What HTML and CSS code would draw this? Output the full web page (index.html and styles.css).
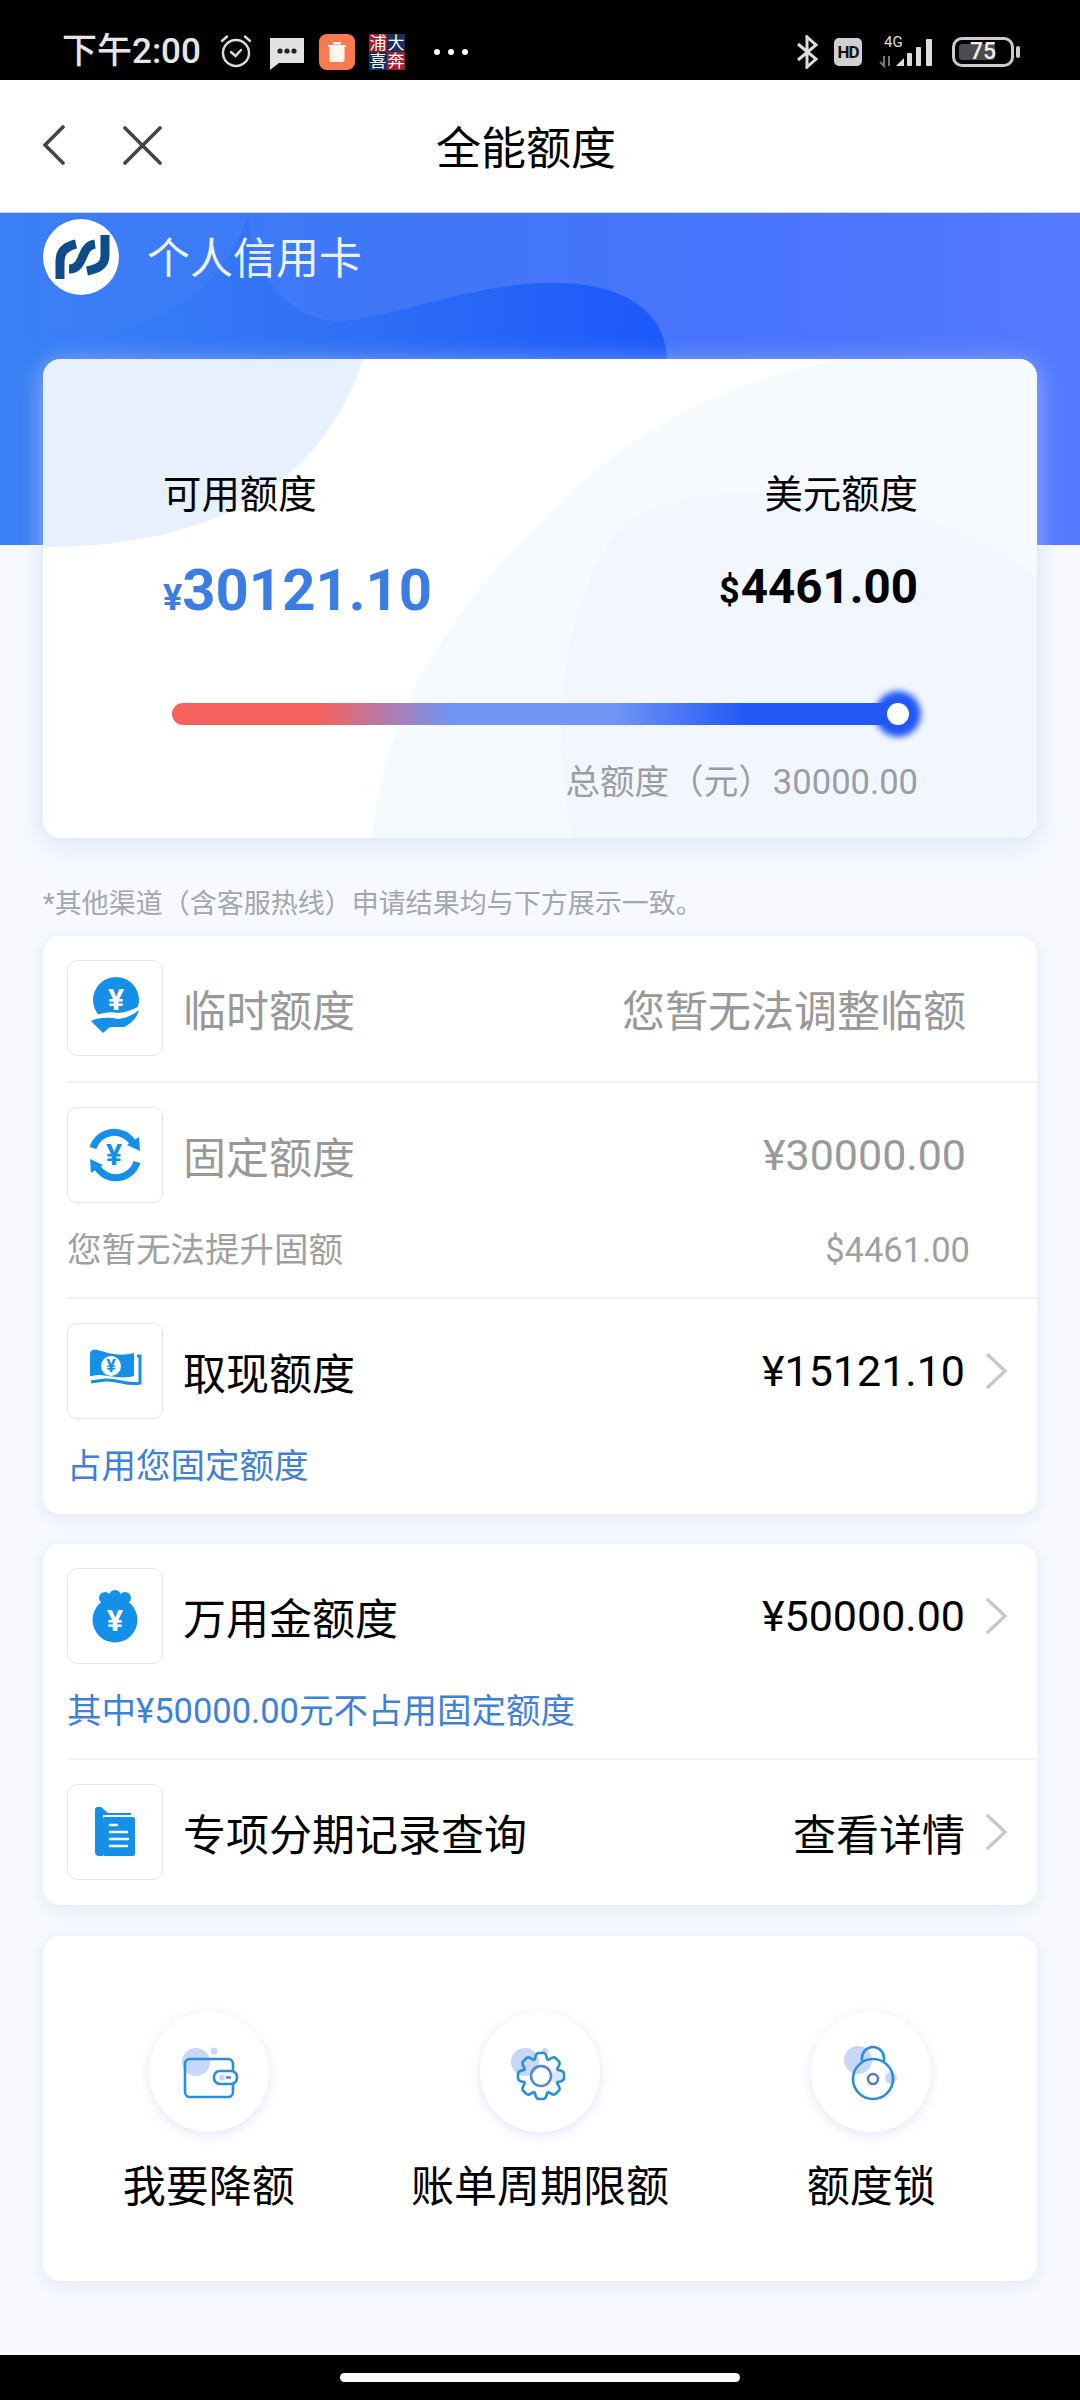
FILE: index.html
```html
<!DOCTYPE html>
<html lang="zh-CN">
<head>
    <meta charset="UTF-8">
    <meta name="viewport" content="width=device-width, initial-scale=1.0">
    <title>全能额度</title>
    <link rel="stylesheet" href="styles.css">
</head>
<body>
    <!-- Status bar -->
    <div class="status-bar">
        <span class="time">下午2:00</span>
        <svg class="st-alarm" width="34" height="34" viewBox="0 0 34 34" fill="none" stroke="#ddd" stroke-width="2.4" stroke-linecap="round">
            <circle cx="17" cy="19" r="13"/>
            <path d="M3 7 L8 2.5 M31 7 L26 2.5"/>
            <path d="M12 18 L16.500 22 L22 16"/>
        </svg>
        <svg class="st-msg" width="34" height="32" viewBox="0 0 34 32">
            <path d="M0 0 H34 V25 H9 L0 32 Z" fill="#e2e2e2"/>
            <circle cx="10" cy="13" r="2.600" fill="#222"/>
            <circle cx="17" cy="13" r="2.600" fill="#222"/>
            <circle cx="24" cy="13" r="2.600" fill="#222"/>
        </svg>
        <svg class="st-app" width="36" height="36" viewBox="0 0 36 36">
            <rect width="36" height="36" rx="8" fill="#fb7a50"/>
            <path d="M9 11 H27 V13 H25.500 V26 Q25.500 28 23.500 28 H12.500 Q10.500 28 10.500 26 V13 H9 Z" fill="#fdf6ee"/>
            <rect x="14" y="8" width="8" height="2.500" rx="1" fill="#fdf6ee"/>
        </svg>
        <div class="st-pic">
            <span class="pic-red">浦</span><span class="pic-navy">大</span>
            <span class="pic-navy">喜</span><span class="pic-red">奔</span>
        </div>
        <div class="st-dots"><i></i><i></i><i></i></div>

        <div class="st-right">
            <svg width="21" height="34" viewBox="0 0 21 34" fill="none" stroke="#ddd" stroke-width="3">
                <path d="M1 9 L19 24 L10 32 V2 L19 10 L1 25"/>
            </svg>
            <span class="st-hd">HD</span>
            <div class="st-signal">
                <span class="st-4g">4G</span>
                <svg width="57" height="31" viewBox="0 0 57 31">
                    <path d="M5 19 V29 L1 25 M10 29 V19" fill="none" stroke="#777" stroke-width="2"/>
                    <path d="M17 29 L25 21 V29 Z" fill="#ddd"/>
                    <rect x="28" y="16" width="5" height="13" rx="1" fill="#ddd"/>
                    <rect x="37" y="10" width="5" height="19" rx="1" fill="#ddd"/>
                    <rect x="47" y="2" width="6" height="27" rx="1" fill="#ddd"/>
                </svg>
            </div>
            <div class="st-battery"><div class="st-battery-fill"></div><span>75</span></div>
            <div class="st-nub"></div>
        </div>
    </div>

    <!-- Title bar -->
    <div class="title-bar">
        <svg class="ic-back" width="22" height="40" viewBox="0 0 22 40" fill="none" stroke="#444" stroke-width="3.600" stroke-linecap="round">
            <path d="M20 2 L2 20 L20 38"/>
        </svg>
        <svg class="ic-close" width="39" height="39" viewBox="0 0 39 39" fill="none" stroke="#444" stroke-width="3.600" stroke-linecap="round">
            <path d="M2 2 L37 37 M37 2 L2 37"/>
        </svg>
        <h1>全能额度</h1>
    </div>

    <!-- Blue header band -->
    <div class="hero">
        <svg class="hero-bg" width="1080" height="333" viewBox="0 0 1080 333">
            <defs>
                <linearGradient id="blob" x1="60" y1="0" x2="670" y2="0" gradientUnits="userSpaceOnUse">
                    <stop offset="0" stop-color="#3a7ff6"/>
                    <stop offset="0.5" stop-color="#2f6ef5"/>
                    <stop offset="1" stop-color="#1c58fb"/>
                </linearGradient>
            </defs>
            <path d="M248 0 C250 50 280 110 345 108 C410 100 500 60 585 72 C640 80 668 110 667 150 L660 333 H0 V130 C120 130 220 100 248 0 Z" fill="url(#blob)"/>
        </svg>
        <div class="brand">
            <svg class="brand-logo" width="76" height="76" viewBox="0 0 76 76" fill="none" stroke="#0f4c8a" stroke-width="9">
                <circle cx="38" cy="38" r="38" fill="#fff" stroke="none"/>
                <path d="M17 60 V42 C17 32 24 27 33 25"/>
                <path d="M26 50 C42 50 37 27 52 25"/>
                <path d="M62 16 V36 C62 47 54 50 44 52"/>
            </svg>
            <span>个人信用卡</span>
        </div>
    </div>

    <!-- Limit summary card -->
    <div class="summary">
        <svg class="summary-bg" width="994" height="479" viewBox="0 0 994 479">
            <path d="M0 0 H320 C285 110 190 188 0 188 Z" fill="#e8f0fd"/>
            <path d="M797 0 H994 V479 H329 C345 330 420 240 510 150 C600 60 700 20 797 0 Z" fill="#f6f9fe"/>
            <path d="M580 165 C640 130 700 132 750 134 C860 145 950 180 994 220 V479 H529 C505 360 520 240 580 165 Z" fill="#f2f6fe"/>
        </svg>
        <div class="summary-body">
            <div class="summary-top">
                <div>
                    <div class="summary-label">可用额度</div>
                    <div class="amount amount-cny"><small>¥</small>30121.10</div>
                </div>
                <div class="summary-right">
                    <div class="summary-label">美元额度</div>
                    <div class="amount amount-usd"><small>$</small>4461.00</div>
                </div>
            </div>
            <div class="slider"><div class="slider-knob"></div></div>
            <div class="summary-total">总额度（元）30000.00</div>
        </div>
    </div>

    <p class="note">*其他渠道（含客服热线）申请结果均与下方展示一致。</p>

    <div class="card">
        <div class="item roomy">
            <div class="item-main disabled">
                <div class="item-icon">
                    <svg width="96" height="96" viewBox="0 0 96 96">
                        <circle cx="49" cy="40" r="23" fill="#1590e8"/>
                        <text x="49" y="50" class="glyph glyph-lg">¥</text>
                        <path d="M24 62 C34 54 44 55 52 56 C60 55 68 52 73 49" fill="none" stroke="#fff" stroke-width="6"/>
                        <path d="M24 61 C32 57 42 57 50 59 C58 59 66 55 72 50 C70 58 64 64 57 67 L43 67 L36 73 Z" fill="#1590e8"/>
                    </svg>
                </div>
                <span class="item-title">临时额度</span>
                <span class="item-val no-arrow">您暂无法调整临额</span>
            </div>
        </div>
        <div class="item">
            <div class="item-main disabled">
                <div class="item-icon">
                    <svg width="96" height="96" viewBox="0 0 96 96">
                        <g fill="none" stroke="#1590e8" stroke-width="7">
                            <path d="M26 41 A22 22 0 0 1 66 36"/>
                            <path d="M70 55 A22 22 0 0 1 30 60"/>
                        </g>
                        <path d="M60 38 L72 30 L73 44 Z M36 58 L24 66 L23 52 Z" fill="#1590e8"/>
                        <text x="47" y="58" class="glyph glyph-lg blue">¥</text>
                    </svg>
                </div>
                <span class="item-title">固定额度</span>
                <span class="item-val no-arrow">¥30000.00</span>
            </div>
            <div class="item-sub gray">
                <span>您暂无法提升固额</span>
                <span class="sub-val">$4461.00</span>
            </div>
        </div>
        <div class="item last">
            <div class="item-main">
                <div class="item-icon">
                    <svg width="96" height="96" viewBox="0 0 96 96">
                        <path d="M23 31 C23 27 26 26 30 27 C42 30 52 34 67 30 V53 C52 57 40 51 30 52 C26 53 23 53 23 53 Z" fill="#1590e8"/>
                        <path d="M70 33 H73 V60 C60 63 50 56 38 57 C32 58 27 58 24 59" fill="none" stroke="#1590e8" stroke-width="3"/>
                        <circle cx="44" cy="43" r="10" fill="#fff"/>
                        <text x="44" y="49" class="glyph glyph-sm blue">¥</text>
                    </svg>
                </div>
                <span class="item-title">取现额度</span>
                <span class="item-val">¥15121.10</span>
                <svg class="chevron" width="22" height="38" viewBox="0 0 22 38" fill="none" stroke="#c8c8c8" stroke-width="3.400">
                    <path d="M2 2 L20 19 L2 36"/>
                </svg>
            </div>
            <div class="item-sub blue">占用您固定额度</div>
        </div>
    </div>

    <div class="card gap">
        <div class="item">
            <div class="item-main">
                <div class="item-icon">
                    <svg width="96" height="96" viewBox="0 0 96 96">
                        <circle cx="48" cy="52" r="22.500" fill="#1590e8"/>
                        <circle cx="38" cy="30" r="6" fill="#1590e8"/>
                        <circle cx="48" cy="28" r="6" fill="#1590e8"/>
                        <circle cx="58" cy="30" r="6" fill="#1590e8"/>
                        <rect x="38" y="30" width="20" height="6" fill="#1590e8"/>
                        <text x="48" y="63" class="glyph glyph-lg">¥</text>
                    </svg>
                </div>
                <span class="item-title">万用金额度</span>
                <span class="item-val">¥50000.00</span>
                <svg class="chevron" width="22" height="38" viewBox="0 0 22 38" fill="none" stroke="#c8c8c8" stroke-width="3.400">
                    <path d="M2 2 L20 19 L2 36"/>
                </svg>
            </div>
            <div class="item-sub blue">其中¥50000.00元不占用固定额度</div>
        </div>
        <div class="item last">
            <div class="item-main">
                <div class="item-icon">
                    <svg width="96" height="96" viewBox="0 0 96 96">
                        <path d="M28 26 Q28 23 31 23 H34 L41 29 H64 V31 H36 V72 H32 Q28 72 28 68 Z" fill="#1590e8"/>
                        <rect x="36" y="33" width="32" height="39" rx="2" fill="#1590e8"/>
                        <g stroke="#fff" stroke-width="2.500" stroke-linecap="round">
                            <path d="M43 41 H50 M43 48 H60 M43 55 H61 M43 62 H60"/>
                        </g>
                    </svg>
                </div>
                <span class="item-title">专项分期记录查询</span>
                <span class="item-val">查看详情</span>
                <svg class="chevron" width="22" height="38" viewBox="0 0 22 38" fill="none" stroke="#c8c8c8" stroke-width="3.400">
                    <path d="M2 2 L20 19 L2 36"/>
                </svg>
            </div>
        </div>
    </div>

    <div class="card gap actions">
        <div class="action">
            <div class="action-icon">
                <svg width="120" height="120" viewBox="0 0 120 120">
                    <circle cx="47" cy="50" r="14" fill="#c6d7f7"/>
                    <circle cx="65" cy="39" r="3.500" fill="#c6d7f7"/>
                    <rect x="36" y="47" width="48" height="38" rx="5" fill="none" stroke="#2a8fd6" stroke-width="2.600"/>
                    <rect x="65" y="59" width="23" height="13" rx="6" fill="#fff" stroke="#2a8fd6" stroke-width="2.600"/>
                    <circle cx="73" cy="65.500" r="3" fill="#c6d7f7"/>
                    <path d="M77 65.500 H82" stroke="#5b78c8" stroke-width="2.400"/>
                </svg>
            </div>
            <span>我要降额</span>
        </div>
        <div class="action">
            <div class="action-icon">
                <svg width="120" height="120" viewBox="0 0 120 120">
                    <defs>
                        <path id="tooth" d="M-6.500 -15.700 C-5.500 -18 -6 -22.500 -2.500 -23 H2.500 C6 -22.500 5.500 -18 6.500 -15.700"/>
                    </defs>
                    <circle cx="45" cy="50" r="14" fill="#c6d7f7"/>
                    <circle cx="65" cy="39" r="3" fill="#c6d7f7"/>
                    <circle cx="77" cy="65" r="6" fill="#dbe6fa"/>
                    <g transform="translate(61 64)" fill="none" stroke="#2a8fd6" stroke-width="2.600">
                        <use href="#tooth"/>
                        <use href="#tooth" transform="rotate(45)"/>
                        <use href="#tooth" transform="rotate(90)"/>
                        <use href="#tooth" transform="rotate(135)"/>
                        <use href="#tooth" transform="rotate(180)"/>
                        <use href="#tooth" transform="rotate(225)"/>
                        <use href="#tooth" transform="rotate(270)"/>
                        <use href="#tooth" transform="rotate(315)"/>
                    </g>
                    <circle cx="61" cy="64" r="10" fill="none" stroke="#5a86cc" stroke-width="2.600"/>
                </svg>
            </div>
            <span>账单周期限额</span>
        </div>
        <div class="action">
            <div class="action-icon">
                <svg width="120" height="120" viewBox="0 0 120 120">
                    <circle cx="47" cy="48" r="14" fill="#c6d7f7"/>
                    <circle cx="80" cy="66" r="6" fill="#c6d7f7"/>
                    <path d="M51 49 V46 A11 11 0 0 1 73 46 V49" fill="none" stroke="#2a8fd6" stroke-width="2.600"/>
                    <circle cx="62" cy="67" r="20" fill="none" stroke="#2a8fd6" stroke-width="2.600"/>
                    <circle cx="62" cy="67" r="5" fill="none" stroke="#5a78c8" stroke-width="2.600"/>
                </svg>
            </div>
            <span>额度锁</span>
        </div>
    </div>

    <!-- Navigation bar -->
    <div class="nav-bar"><div class="nav-pill"></div></div>
</body>
</html>
```

FILE: styles.css
```css
* {
    margin: 0;
    padding: 0;
    box-sizing: border-box;
}

html, body {
    height: 2400px;
    overflow: hidden;
}

body {
    display: flex;
    flex-direction: column;
    background-color: #f7f9fe;
    color: #000;
    font-family: Roboto, "Noto Sans CJK SC", sans-serif;
}

/* status bar */
.status-bar {
    display: flex;
    align-items: center;
    flex-shrink: 0;
    height: 80px;
    padding: 24px 60px 0 62px;
    background-color: #000;
    color: #e6e6e6;
}

.time {
    font-size: 35px;
    font-weight: 500;
    line-height: 40px;
}

.st-alarm {
    margin: -2px 0 0 18px;
}

.st-msg {
    margin: 3px 0 0 17px;
}

.st-app {
    margin-left: 15px;
}

.st-pic {
    display: grid;
    grid-template-columns: 18px 18px;
    grid-auto-rows: 18px;
    margin-left: 14px;
    font-size: 17px;
    line-height: 18px;
    text-align: center;
    color: #fff;
}

.pic-red {
    background-color: #a3182f;
}

.pic-navy {
    background-color: #14305c;
}

.st-dots {
    display: flex;
    gap: 8px;
    margin-left: 29px;
}

.st-dots i {
    width: 6px;
    height: 6px;
    border-radius: 50%;
    background-color: #fff;
}

.st-right {
    display: flex;
    align-items: center;
    margin-left: auto;
}

.st-hd {
    width: 28px;
    height: 28px;
    margin-left: 16px;
    border-radius: 5px;
    background-color: #d0d0d0;
    color: #111;
    font-size: 17px;
    font-weight: 700;
    line-height: 28px;
    text-align: center;
    letter-spacing: -1px;
}

.st-signal {
    position: relative;
    width: 57px;
    height: 31px;
    margin-left: 17px;
}

.st-4g {
    position: absolute;
    left: 5px;
    top: -3px;
    font-size: 15px;
    line-height: 16px;
    color: #ddd;
}

.st-signal svg {
    display: block;
}

.st-battery {
    position: relative;
    width: 62px;
    height: 30px;
    margin-left: 16px;
    border: 3px solid #ccc;
    border-radius: 10px;
    color: #eee;
    font-size: 23px;
    font-weight: 500;
    line-height: 24px;
    text-align: center;
}

.st-battery-fill {
    position: absolute;
    left: 4px;
    top: 4px;
    bottom: 4px;
    width: 36px;
    border-radius: 3px;
    background-color: #4c4c4c;
}

.st-battery span {
    position: relative;
}

.st-nub {
    width: 4px;
    height: 12px;
    margin-left: 2px;
    border-radius: 2px;
    background-color: #ccc;
}

/* title bar */
.title-bar {
    display: flex;
    align-items: center;
    flex-shrink: 0;
    height: 133px;
    padding: 0 0 2px 43px;
    background-color: #fff;
    border-bottom: 1px solid #c5d9f5;
}

.ic-close {
    margin-left: 58px;
}

.title-bar h1 {
    margin-left: 274px;
    font-size: 45px;
    font-weight: 400;
}

/* blue band */
.hero {
    position: relative;
    flex-shrink: 0;
    height: 332px;
    background: linear-gradient(90deg, #3a7ff6 0%, #3f77f6 35%, #4874fb 70%, #557aff 100%);
    overflow: hidden;
}

.hero-bg {
    position: absolute;
    left: 0;
    top: 0;
}

.brand {
    position: relative;
    display: flex;
    align-items: center;
    padding: 6px 0 0 43px;
    color: #ebf2ff;
    font-size: 43px;
}

.brand span {
    margin: -5px 0 0 28px;
}

/* summary card */
.summary {
    position: relative;
    flex-shrink: 0;
    margin: -186px 43px 0;
    border-radius: 18px;
    background-color: #fff;
    box-shadow: 0 4px 26px rgba(195, 210, 245, 0.65);
    overflow: hidden;
}

.summary-bg {
    position: absolute;
    left: 0;
    top: 0;
}

.summary-body {
    position: relative;
    padding: 111px 119px 34px 120px;
}

.summary-top {
    display: flex;
    justify-content: space-between;
}

.summary-right {
    text-align: right;
}

.summary-label {
    font-size: 38.4px;
    line-height: 50px;
}

.amount {
    height: 70px;
    line-height: 70px;
    font-weight: 700;
    white-space: nowrap;
}

.amount-cny {
    margin-top: 35px;
    color: #3b7de2;
    font-size: 58px;
}

.amount-cny small {
    font-size: 36px;
    margin-right: 0;
}

.amount-usd {
    margin-top: 32px;
    font-size: 47.5px;
}

.amount-usd small {
    font-size: 36px;
    margin-right: 1px;
}

.slider {
    position: relative;
    height: 22px;
    margin: 78px 9px 0;
    border-radius: 11px;
    background: linear-gradient(90deg, #f6625e 0%, #f6625e 20%, #7095f5 38%, #7095f5 60%, #2158f5 78%, #2158f5 100%);
}

.slider-knob {
    position: absolute;
    right: 0;
    top: 0;
    width: 22px;
    height: 22px;
    border-radius: 50%;
    background-color: #fff;
    box-shadow: 0 0 6px 12px #2158f5;
}

.summary-total {
    margin-top: 35px;
    color: #999ea6;
    font-size: 34.6px;
    line-height: 44px;
    text-align: right;
    white-space: nowrap;
}

.note {
    flex-shrink: 0;
    margin: 46px 0 0 43px;
    color: #a2a6ad;
    font-size: 27px;
    line-height: 40px;
    white-space: nowrap;
}

/* list cards */
.card {
    flex-shrink: 0;
    margin: 12px 43px 0;
    border-radius: 18px;
    background-color: #fff;
    box-shadow: 0 4px 18px rgba(205, 212, 232, 0.45);
}

.card.gap {
    margin-top: 30px;
}

.item {
    margin-left: 24px;
    padding: 24px 0;
    border-bottom: 2px solid #f1f2f4;
}

.item.roomy,
.item.last {
    padding-bottom: 25px;
}

.item.last {
    border-bottom: none;
}

.item-main {
    display: flex;
    align-items: center;
    height: 96px;
}

.item-icon {
    flex-shrink: 0;
    width: 96px;
    height: 96px;
    margin-right: 20px;
    border: 1px solid #e4e4e4;
    border-radius: 10px;
}

.item-icon svg {
    display: block;
    margin: -1px;
}

.glyph {
    fill: #fff;
    font-weight: 700;
    text-anchor: middle;
}

.glyph.blue {
    fill: #1590e8;
}

.glyph-lg {
    font-size: 30px;
}

.glyph-sm {
    font-size: 18px;
}

.item-title {
    font-size: 43px;
    white-space: nowrap;
}

.item-val {
    margin-left: auto;
    font-size: 43px;
    white-space: nowrap;
}

.item-val.no-arrow {
    margin-right: 71px;
}

.chevron {
    flex-shrink: 0;
    margin: 0 30px 0 20px;
}

.disabled .item-title,
.disabled .item-val {
    color: #999;
}

.item-sub {
    display: flex;
    justify-content: space-between;
    margin: 22px 0 -2px;
    font-size: 34.5px;
    line-height: 50px;
    white-space: nowrap;
}

.item-sub.gray {
    color: #a0a0a0;
}

.item-sub.blue {
    color: #3f80d8;
}

.sub-val {
    margin-right: 67px;
}

/* shortcuts */
.actions {
    display: grid;
    grid-template-columns: repeat(3, 1fr);
    height: 345px;
    padding-top: 76px;
}

.card.actions {
    margin-top: 31px;
}

.action {
    display: flex;
    flex-direction: column;
    align-items: center;
    font-size: 43px;
    white-space: nowrap;
}

.action-icon {
    width: 120px;
    height: 120px;
    margin-bottom: 20px;
    border-radius: 50%;
    background-color: #fff;
    box-shadow: 0 3px 12px rgba(200, 208, 240, 0.5);
}

.action-icon svg {
    display: block;
}

/* navigation bar */
.nav-bar {
    display: flex;
    justify-content: center;
    align-items: center;
    flex-shrink: 0;
    height: 45px;
    margin-top: auto;
    background-color: #000;
}

.nav-pill {
    width: 400px;
    height: 9px;
    border-radius: 5px;
    background-color: #fff;
}
```
